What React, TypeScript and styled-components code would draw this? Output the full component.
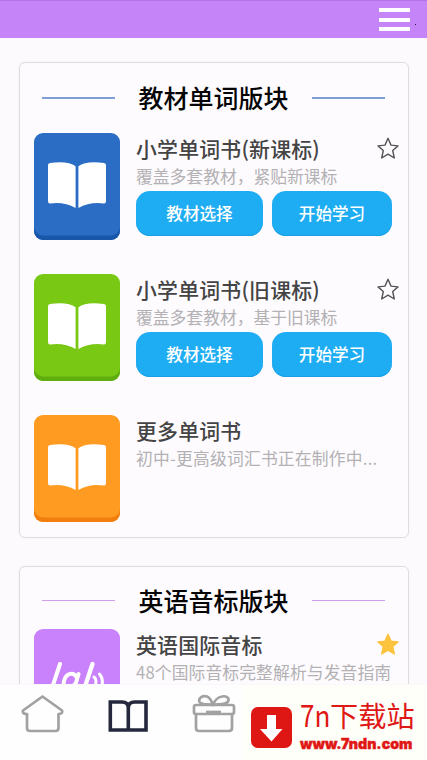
import React from 'react';
import styled, { createGlobalStyle } from 'styled-components';

const GlobalStyle = createGlobalStyle`
  *, *::before, *::after { box-sizing: border-box; }
  html, body { margin: 0; padding: 0; overflow: hidden; }
  body { font-family: "Noto Sans CJK SC", "Noto Sans", sans-serif; background: #fdfafe; }
  h2, h3, p { margin: 0; }
  button { font-family: inherit; border: 0; padding: 0; margin: 0; background: none; }
  svg { display: block; }
`;

const Screen = styled.div`
  width: 427px;
  height: 760px;
  display: flex;
  flex-direction: column;
  overflow: hidden;
  background: #fdfafe;
`;

const Header = styled.header`
  flex: 0 0 38px;
  display: flex;
  align-items: flex-start;
  justify-content: flex-end;
  gap: 5px;
  padding: 7px 11px 0 0;
  background: #c584f8;
  border-top: 1px solid #b273e6;
`;

const MenuButton = styled.button`
  width: 31px;
  height: 23px;
  display: flex;
  flex-direction: column;
  justify-content: space-between;
`;

const MenuBar = styled.span`
  height: 4px;
  background: #fff;
`;

const Speck = styled.span`
  width: 1px;
  height: 1px;
  margin-top: 16px;
  background: #301040;
`;

const Content = styled.main`
  flex: 1 1 0;
  min-height: 0;
  overflow: hidden;
  padding: 24px 18.5px 0 19px;
  display: flex;
  flex-direction: column;
  gap: 28px;
`;

const Card = styled.section<{ $height: number }>`
  flex: 0 0 ${(p) => p.$height}px;
  border: 1.5px solid #e0dde1;
  border-radius: 6px;
  box-shadow: 0 0 3px rgba(80, 60, 90, 0.05);
  background: #fdfbfe;
  padding: 0 13px 0 14px;
`;

const CardHeading = styled.div<{ $height: number; $lift: number }>`
  height: ${(p) => p.$height}px;
  display: flex;
  align-items: center;
  justify-content: space-between;
  padding: ${(p) => (p.$lift < 0 ? -p.$lift : 0)}px 9.5px ${(p) => (p.$lift > 0 ? p.$lift : 0)}px 8px;
`;

const Rule = styled.span<{ $color: string; $thickness: number }>`
  width: 73px;
  height: ${(p) => p.$thickness}px;
  background: ${(p) => p.$color};
`;

const Heading = styled.h2`
  font-size: 25px;
  line-height: 32px;
  padding-bottom: 2px;
  font-weight: 500;
  color: #050505;
  white-space: nowrap;
`;

const ItemList = styled.div`
  display: flex;
  flex-direction: column;
  gap: 34px;
`;

const Item = styled.article`
  height: 107px;
  display: grid;
  grid-template-columns: 86px 1fr;
  column-gap: 16px;
`;

const Cover = styled.div<{ $color: string; $edge: string }>`
  height: 107px;
  border-radius: 9px;
  background: ${(p) => p.$color};
  box-shadow: inset 0 -4.5px 0 ${(p) => p.$edge};
  display: flex;
  justify-content: center;
  padding-top: 29px;
`;

const Info = styled.div`
  min-width: 0;
  display: flex;
  flex-direction: column;
`;

const TitleRow = styled.div`
  height: 30px;
  display: flex;
  justify-content: space-between;
  align-items: center;
  margin-right: -5.5px;
`;

const Title = styled.h3`
  font-size: 20.9px;
  line-height: 30px;
  font-weight: 500;
  letter-spacing: 0.2px;
  color: #444;
  white-space: nowrap;
`;

const Description = styled.p<{ $tracking: number }>`
  height: 28px;
  font-size: 16.8px;
  line-height: 26px;
  letter-spacing: ${(p) => p.$tracking}px;
  color: #b3b1b4;
  white-space: nowrap;
`;

const Actions = styled.div`
  display: grid;
  grid-template-columns: 127px 120px;
  gap: 9px;
`;

const ActionButton = styled.button`
  height: 45px;
  border-radius: 14px;
  background: #1eadf3;
  box-shadow: inset 0 -1px 0 #189ce4;
  color: #fff;
  font-size: 16.6px;
  line-height: 45px;
  font-weight: 500;
`;

const BottomBar = styled.nav`
  flex: 0 0 76px;
  display: flex;
  background: #fefefe;
  border-top: 1px solid #faf8fb;
`;

const Tabs = styled.div`
  width: 242px;
  display: flex;
  align-items: flex-start;
  gap: 44px;
  padding: 9px 0 0 21px;
`;

const Brand = styled.aside`
  flex: 1;
  display: flex;
  gap: 8px;
  padding: 21.5px 0 0 9px;
  background: #fffffa;
`;

const BrandText = styled.div`
  display: flex;
  flex-direction: column;
  gap: 7px;
  margin-top: -10px;
  color: #df1715;
  white-space: nowrap;
`;

const BrandName = styled.div`
  display: flex;
  align-items: baseline;
  font-size: 28.2px;
  line-height: 34px;
  height: 34px;
`;

const BrandLatin = styled.span`
  width: 30px;
  font-size: 30px;
  transform: scaleX(0.87);
  transform-origin: left;
`;

const BrandUrl = styled.div`
  height: 12px;
  font-family: Inter, Roboto, sans-serif;
  font-size: 14.2px;
  line-height: 12px;
  font-weight: 900;
  -webkit-text-stroke: 0.4px #df1715;
`;

const BookGlyph = () => (
  <svg width="58" height="47" viewBox="0 0 58 47" fill="#fff">
    <path d="M0 3Q0 1.3 2 1Q20-1.500 27.600 4.300V46Q16 39.500 2 41.500Q0 41.500 0 39Z" />
    <path d="M58 3Q58 1.300 56 1Q38-1.500 30.400 4.300V46Q42 39.500 56 41.500Q58 41.500 58 39Z" />
  </svg>
);

const PhoneticGlyph = () => (
  <svg width="58" height="40" viewBox="0 0 58 40" fill="none" stroke="#fff" strokeLinecap="round">
    <path d="M12 6L3 33" strokeWidth="4" />
    <path d="M30.500 16L26 32M29 20C26 13 18 15 16 23C14 31 22 33 27 26" strokeWidth="4" />
    <path d="M44.500 6L35.500 33" strokeWidth="4.300" />
    <path d="M46 19Q50 22 46 30M51.500 16Q57 22 52 33" strokeWidth="3" />
  </svg>
);

const Star = ({ filled = false }: { filled?: boolean }) => (
  <svg width="24" height="24" viewBox="0 0 24 24">
    <path
      d="M12 2.300L15 9.100L22 9.900L16.700 14.500L18.300 22L12 18.200L5.700 22L7.300 14.500L2 9.900L9 9.100Z"
      fill={filled ? '#fdc33c' : 'none'}
      stroke={filled ? '#fdc33c' : '#555'}
      strokeWidth="1.400"
      strokeLinejoin="round"
    />
  </svg>
);

const HomeIcon = () => (
  <svg width="43" height="39" viewBox="0 0 43 39" fill="none" stroke="#a2a2a2" strokeWidth="2.700" strokeLinejoin="round">
    <path d="M21.500 2.500L41 16.500Q42 20 37.500 20V34Q37.500 37 34.500 37H9Q6 37 6 34V20Q1 20 2 16.500Z" />
  </svg>
);

const BooksIcon = () => (
  <svg width="40" height="39" viewBox="0 0 40 39" fill="none" stroke="#25283d" strokeWidth="3.600">
    <path d="M2.300 8H14Q20.300 8 20.300 14V36M38 8H26.600Q20.300 8 20.300 14M2.300 6.200V36H38V6.200" />
  </svg>
);

const GiftIcon = () => (
  <svg width="44" height="39" viewBox="0 0 44 39" fill="none" stroke="#a2a2a2" strokeWidth="2.700" strokeLinejoin="round">
    <path d="M4 11H40Q42 11 42 13V18Q42 20 40 20H4Q2 20 2 18V13Q2 11 4 11Z" />
    <path d="M4 20V34Q4 37 7 37H37Q40 37 40 34V20" />
    <path d="M21 11C16 10 9 11 7.500 8C6 4 11 1 15 2.500C18.500 4 20 8 21 11C22 8 25 3 30 2.500C34 1.500 38 4 36 7.500C34 11 27 10 21 11Z" />
    <path d="M14 18H29" />
  </svg>
);

const DownloadMark = () => (
  <svg width="41" height="41" viewBox="0 0 41 41">
    <rect width="41" height="41" rx="7" fill="#de1715" />
    <path d="M16 8H25V22H31.500L20.500 34.500L9 22H16Z" fill="#fff" />
  </svg>
);

interface Course {
  title: string;
  description: string;
  color: string;
  edge: string;
  tracking?: number;
  favorite?: 'empty' | 'filled';
  actions?: string[];
  phonetic?: boolean;
}

const books: Course[] = [
  {
    title: '小学单词书(新课标)',
    description: '覆盖多套教材，紧贴新课标',
    color: '#2b6dc5',
    edge: '#1856aa',
    favorite: 'empty',
    actions: ['教材选择', '开始学习'],
  },
  {
    title: '小学单词书(旧课标)',
    description: '覆盖多套教材，基于旧课标',
    color: '#78c814',
    edge: '#60ad10',
    favorite: 'empty',
    actions: ['教材选择', '开始学习'],
  },
  {
    title: '更多单词书',
    description: '初中-更高级词汇书正在制作中...',
    color: '#fe9b20',
    edge: '#f27f0d',
    tracking: 0.2,
  },
];

const phonetics: Course[] = [
  {
    title: '英语国际音标',
    description: '48个国际音标完整解析与发音指南',
    color: '#ca82fc',
    edge: '#b068e6',
    tracking: 0.1,
    favorite: 'filled',
    phonetic: true,
  },
];

const CourseItem = ({ course }: { course: Course }) => (
  <Item>
    <Cover $color={course.color} $edge={course.edge}>
      {course.phonetic ? <PhoneticGlyph /> : <BookGlyph />}
    </Cover>
    <Info>
      <TitleRow>
        <Title>{course.title}</Title>
        {course.favorite && <Star filled={course.favorite === 'filled'} />}
      </TitleRow>
      <Description $tracking={course.tracking ?? 0}>{course.description}</Description>
      {course.actions && (
        <Actions>
          {course.actions.map((label) => (
            <ActionButton key={label}>{label}</ActionButton>
          ))}
        </Actions>
      )}
    </Info>
  </Item>
);

export default function App() {
  return (
    <>
      <GlobalStyle />
      <Screen>
        <Header>
          <MenuButton aria-label="菜单">
            <MenuBar />
            <MenuBar />
            <MenuBar />
          </MenuButton>
          <Speck />
        </Header>
        <Content>
          <Card $height={476}>
            <CardHeading $height={70} $lift={1}>
              <Rule $color="#7f9fd4" $thickness={2} />
              <Heading>教材单词版块</Heading>
              <Rule $color="#7f9fd4" $thickness={2} />
            </CardHeading>
            <ItemList>
              {books.map((course) => (
                <CourseItem key={course.title} course={course} />
              ))}
            </ItemList>
          </Card>
          <Card $height={200}>
            <CardHeading $height={62} $lift={-5}>
              <Rule $color="#d0a0ee" $thickness={1} />
              <Heading>英语音标版块</Heading>
              <Rule $color="#d0a0ee" $thickness={1} />
            </CardHeading>
            <ItemList>
              {phonetics.map((course) => (
                <CourseItem key={course.title} course={course} />
              ))}
            </ItemList>
          </Card>
        </Content>
        <BottomBar>
          <Tabs>
            <HomeIcon />
            <BooksIcon />
            <GiftIcon />
          </Tabs>
          <Brand>
            <DownloadMark />
            <BrandText>
              <BrandName>
                <BrandLatin>7n</BrandLatin>
                <span>下载站</span>
              </BrandName>
              <BrandUrl>www.7ndn.com</BrandUrl>
            </BrandText>
          </Brand>
        </BottomBar>
      </Screen>
    </>
  );
}
